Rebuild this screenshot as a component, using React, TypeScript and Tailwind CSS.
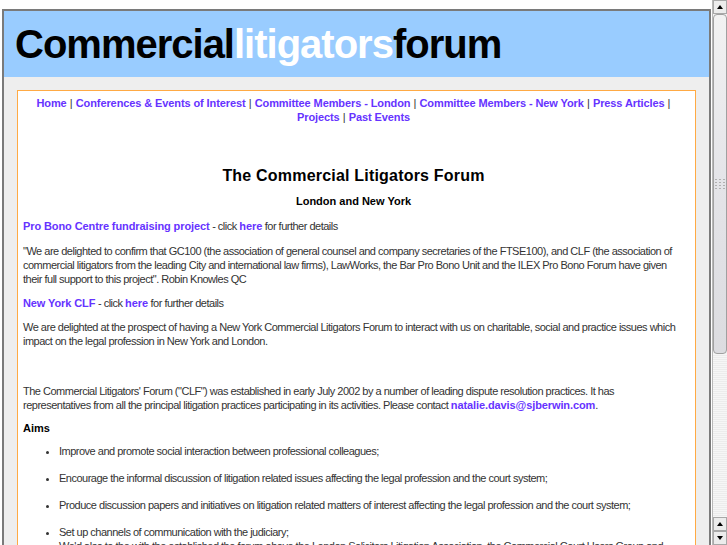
import React from "react";

const navLinks = [
  "Home",
  "Conferences & Events of Interest",
  "Committee Members - London",
  "Committee Members - New York",
  "Press Articles",
  "Projects",
  "Past Events",
];

const aims = [
  "Improve and promote social interaction between professional colleagues;",
  "Encourage the informal discussion of litigation related issues affecting the legal profession and the court system;",
  "Produce discussion papers and initiatives on litigation related matters of interest affecting the legal profession and the court system;",
  "Set up channels of communication with the judiciary;",
  "We'd also to the with the established the forum above the London Solicitors Litigation Association, the Commercial Court Users Group and",
];

const Link = ({ children }: { children: React.ReactNode }) => (
  <a className="font-bold tracking-[-0.1px] text-[#6633ff] no-underline">{children}</a>
);

const Scrollbar = () => (
  <div className="flex h-[545px] w-[15px] shrink-0 flex-col border-l border-[#b8b8b8] bg-[#f4f4f4]">
    <div className="flex h-[14px] items-center justify-center border border-[#a8a8a8] bg-[#ececec]">
      <div className="h-0 w-0 border-x-[3px] border-b-[4px] border-x-transparent border-b-black" />
    </div>
    <div className="flex h-[340px] flex-col items-center justify-center rounded-sm border border-[#a0a0a0] bg-gradient-to-b from-[#f2f2f2] via-[#e4e4e8] to-[#dcdce0]">
      <div className="grid grid-cols-3 gap-[2px]">
        {Array.from({ length: 12 }).map((_, i) => (
          <div key={i} className="h-[1px] w-[2px] bg-[#b0b0b0]" />
        ))}
      </div>
    </div>
    <div className="flex-1 bg-[repeating-linear-gradient(0deg,#f6f6f6_0px,#f6f6f6_1px,#ececec_1px,#ececec_2px)]" />
    <div className="flex h-[14px] items-center justify-center border border-[#a8a8a8] bg-[#ececec]">
      <div className="h-0 w-0 border-x-[3px] border-b-[4px] border-x-transparent border-b-black" />
    </div>
    <div className="flex h-[14px] items-center justify-center border border-[#a8a8a8] bg-[#ececec]">
      <div className="h-0 w-0 border-x-[3px] border-t-[4px] border-x-transparent border-t-black" />
    </div>
  </div>
);

export default function App() {
  return (
    <div className="flex h-[545px] w-[727px] overflow-hidden bg-white font-['Liberation_Sans',Arial,sans-serif]">
      <div className="flex-1 pl-[2px] pr-[1px] pt-[9px]">
        <div className="border-2 border-[#7a7a7a] bg-[#eeeeee]">
          <header className="flex h-[66px] items-center bg-[#99ccff] pl-[11px]">
            <h1 className="text-[40px] font-bold leading-none tracking-[-1px] text-black">
              Commercial<span className="text-white">litigators</span>forum
            </h1>
          </header>
          <div className="px-[13px] pt-[13px]">
            <div className="h-[480px] border border-[#ffaa44] bg-white pl-[5px] pr-[11px] text-[11px] leading-[14px] tracking-[-0.5px] text-[#333]">
              <nav className="pt-[5px] text-center text-[11px] leading-[14px] tracking-[0.05px] text-[#333]">
                {navLinks.map((l, i) => (
                  <React.Fragment key={l}>
                    <Link>{l}</Link>
                    {i < navLinks.length - 1 && " | "}
                  </React.Fragment>
                ))}
              </nav>
              <h2 className="mt-[42px] text-center text-[16px] font-bold leading-[20px] tracking-[0.2px] text-black">
                The Commercial Litigators Forum
              </h2>
              <p className="mt-[8px] text-center font-bold tracking-normal text-black">London and New York</p>
              <p className="mt-[11px]">
                <Link>Pro Bono Centre fundraising project</Link> - click <Link>here</Link> for further details
              </p>
              <p className="mt-[11px]">
                "We are delighted to confirm that GC100 (the association of general counsel and company secretaries of the
                FTSE100), and CLF (the association of commercial litigators from the leading City and international law
                firms), LawWorks, the Bar Pro Bono Unit and the ILEX Pro Bono Forum have given their full support to this
                project". Robin Knowles QC
              </p>
              <p className="mt-[10px]">
                <Link>New York CLF</Link> - click <Link>here</Link> for further details
              </p>
              <p className="mt-[10px]">
                We are delighted at the prospect of having a New York Commercial Litigators Forum to interact with us on
                charitable, social and practice issues which impact on the legal profession in New York and London.
              </p>
              <p className="mt-[36px]">
                The Commercial Litigators' Forum ("CLF") was established in early July 2002 by a number of leading dispute
                resolution practices. It has representatives from all the principal litigation practices participating
                in its activities. Please contact <Link>natalie.davis@sjberwin.com</Link>.
              </p>
              <p className="mt-[9px] font-bold tracking-normal text-black">Aims</p>
              <ul className="mt-[2px] list-disc pl-[36px]">
                {aims.map((a, i) => (
                  <li key={i} className={i === 3 ? "pt-[7px]" : i === 4 ? "" : "pb-[6px] pt-[7px]"}>
                    {a}
                  </li>
                ))}
              </ul>
            </div>
          </div>
        </div>
      </div>
      <Scrollbar />
    </div>
  );
}
